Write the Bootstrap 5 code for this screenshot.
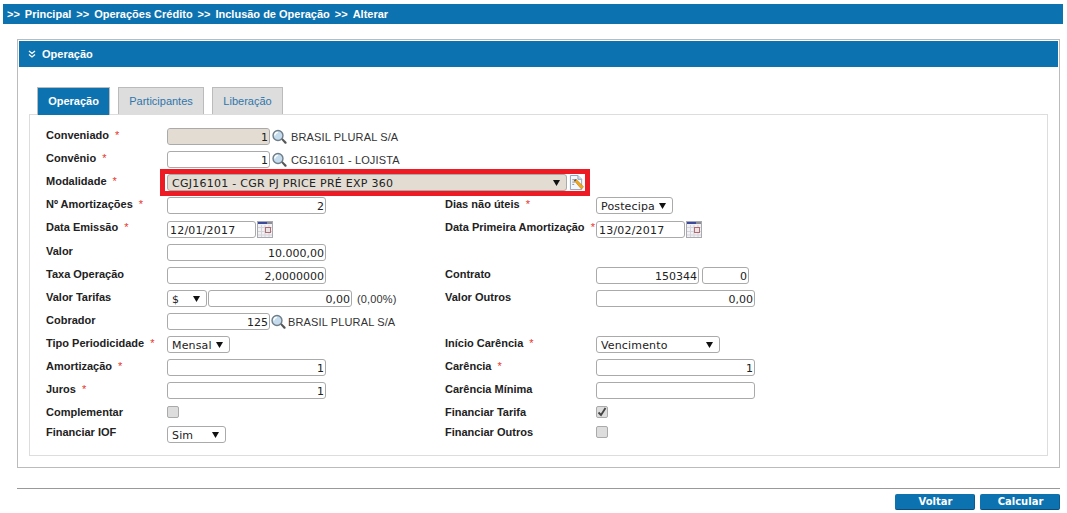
<!DOCTYPE html>
<html lang="pt-BR">
<head>
<meta charset="utf-8">
<title>Alterar Operação</title>
<link href="https://cdn.jsdelivr.net/npm/bootstrap@5.3.0/dist/css/bootstrap.min.css" rel="stylesheet">
<style>
html,body{height:513px;overflow:hidden;background:#fff}
body{font-family:"Liberation Sans",Arial,sans-serif;font-size:11px;color:#222;padding:4px 4px 0 3px}
.crumb-bar{height:20px;background:#0d72b0;color:#fff;font-weight:700;font-size:11px;padding-left:4px;gap:5px}
.main-wrap{margin:15px 3px 0 14px}
.panel-box{border:1px solid #bbb;padding:1px;border-radius:0}
.panel-box .panel-head{height:26px;background:#0d72b0;color:#fff;font-weight:700;font-size:11px;padding:0 0 0 9px;border:0;border-radius:0;gap:6px}
.panel-inner{padding:20px 10px 10px}
.tab-list{border:0;gap:8px;padding-left:8px;height:27px;position:relative;z-index:1}
.tab-list .nav-link{height:27px;border:1px solid #bbb;border-bottom:0;border-radius:0;background:#ddd;color:#2f76ab;font-size:11px;padding:7px 0 0;margin:0;line-height:13px;text-align:center}
.tab-list .nav-link.active{height:28px;background:#0d72b0;color:#fff;font-weight:700;border-color:#bbb}
.tab-w1{width:73px}.tab-w2{width:86px}.tab-w3{width:71px}
.tab-box{border:1px solid #ddd;padding:10px 0 0 16px;height:342px}
.frm-row{height:23px}
.frm-row.tall-row{height:24px;padding-top:1px}
.frm-row.short-row{height:21px}
.left-cell{width:399px;flex:none}
.left-label,.right-label{flex:none;font-weight:700;color:#222;padding-bottom:3px;white-space:nowrap}
.tall-row .left-label,.tall-row .right-label{padding-bottom:5px}
.short-row .left-label,.short-row .right-label{padding-bottom:1px}
.last-row .left-label,.last-row .right-label{padding-bottom:5px}
.left-label{width:121px}
.right-label{width:151px}
.req{color:#e8332a;margin-left:3px;font-weight:400}
.fld.form-control,.fld.form-select{height:17px;min-height:17px;font-family:"DejaVu Sans",Verdana,sans-serif;font-size:11px;line-height:13px;color:#222;border:1px solid #aaa;border-radius:3px;padding:1px 1px 0 2px;box-shadow:none;background-color:#fff;flex:none}
.fld.form-control{text-align:right}
.fld.txt-left.form-control{text-align:left;letter-spacing:.2px}
.fld.form-select{padding:1px 14px 0 4px;letter-spacing:.15px;background-image:url("data:image/svg+xml,%3Csvg xmlns='http://www.w3.org/2000/svg' width='7' height='6'%3E%3Cpath d='M0 0h7L3.500 6z' fill='%23111'/%3E%3C/svg%3E");background-size:7px 6px;background-position:right 6px center;color:#222}
.fld.form-select.wide-select{letter-spacing:.26px}
.fld.tan-fill{background-color:#e3dcd3}
.w-40p{width:40px}.w-47p{width:47px}.w-59p{width:59px}.w-63p{width:63px}.w-77p{width:77px}.w-89p{width:89px}.w-103p{width:103px}.w-124p{width:124px}.w-144p{width:144px}.w-159p{width:159px}.w-400p{width:400px}
.plain-txt{color:#333;letter-spacing:.14px;white-space:nowrap;padding-top:1px}
.ico{flex:none;display:block}
.gap-l1{margin-left:1px}.gap-l2{margin-left:2px}.gap-l3{margin-left:3px}.gap-l5{margin-left:5px}
.tick-box{width:12px;height:12px;background:#ddd;border:1px solid #aaa;border-radius:2px;flex:none;margin-bottom:2px}
.last-row .tick-box{margin-bottom:6px}
.red-mark{position:absolute;left:114px;top:-2px;width:430px;height:27px;border:5px solid #ed1c24;pointer-events:none}
.rule-line{border:0;border-top:1px solid #999;opacity:1;margin:20px 0 5px}
.act-gap{gap:5px}
.act-btn{width:80px;height:16px;background:#0d72b0;color:#fff;font-family:"DejaVu Sans",Verdana,sans-serif;font-weight:700;font-size:10px;line-height:13px;padding:0 0 0 2px;border:0;border-bottom:1px solid #0a4d7a;border-right:1px solid #0a5c90;border-radius:2px}
.act-btn:hover{background:#0d72b0;color:#fff}
</style>
</head>
<body>
<svg width="0" height="0" class="position-absolute">
  <defs>
    <symbol id="i-lupa" viewBox="0 0 16 16">
      <path d="M9.600 10.400l1.400-1.400 4.400 4.200q.6 1-.2 1.800-.9.600-1.700-.2z" fill="#555"/>
      <circle cx="6.400" cy="6.400" r="5.300" fill="#c4dcee" stroke="#6f7d88" stroke-width="1.500"/>
      <path d="M3 6.400a3.400 3.400 0 0 1 3.300-3.400" fill="none" stroke="#fff" stroke-width="1.400"/>
    </symbol>
    <symbol id="i-cal" viewBox="0 0 16 17">
      <rect x=".5" y=".5" width="15" height="16" fill="#f2f2f4" stroke="#a9a9b2"/>
      <rect x="1" y="1" width="9" height="2" fill="#3b4a9c"/>
      <rect x="10" y="1" width="5" height="2" fill="#8d8d95"/>
      <path d="M1 6.500h14M1 10.500h14M1 14h14M4.500 4v12M8 4v12M12 4v12" stroke="#d4d4da" fill="none"/>
      <rect x="8.500" y="6.500" width="5" height="5" fill="#ece4e4" stroke="#b06a72"/>
    </symbol>
    <symbol id="i-edit" viewBox="0 0 16 17">
      <path d="M1.500.5h8l4 4v11h-12z" fill="#f4f7fb" stroke="#8ba0b8"/>
      <path d="M9.500.5v4h4" fill="#dbe4ee" stroke="#8ba0b8"/>
      <path d="M3.500 5h4M3.500 7.500h3M3.500 10h2" stroke="#8a8a8a"/>
      <path d="M6 6.500l2-1.500 7.500 7.500-2.200 2.500z" fill="#f0a81e" stroke="#b9770c" stroke-width=".6"/>
      <path d="M6 6.500l2-1.500-.3-.5-2.300 1z" fill="#333"/>
    </symbol>
  </defs>
</svg>

<div class="crumb-bar d-flex align-items-center">
  <span>&gt;&gt;</span><span>Principal</span><span>&gt;&gt;</span><span>Operações Crédito</span><span>&gt;&gt;</span><span>Inclusão de Operação</span><span>&gt;&gt;</span><span>Alterar</span>
</div>

<div class="main-wrap">
  <div class="panel-box card">
    <div class="panel-head card-header d-flex align-items-center">
      <svg class="ico" width="8" height="8" viewBox="0 0 8 8"><path d="M1 1l3 2.500L7 1M1 4.500l3 2.500 3-2.500" fill="none" stroke="#fff" stroke-width="1.300"/></svg>
      <span>Operação</span>
    </div>
    <div class="panel-inner">
      <ul class="nav nav-tabs tab-list">
        <li class="nav-item"><a class="nav-link active tab-w1" href="#">Operação</a></li>
        <li class="nav-item"><a class="nav-link tab-w2" href="#">Participantes</a></li>
        <li class="nav-item"><a class="nav-link tab-w3" href="#">Liberação</a></li>
      </ul>
      <div class="tab-box">
        <div class="frm-row d-flex align-items-center">
          <div class="left-label">Conveniado <span class="req">*</span></div>
          <input class="fld form-control tan-fill w-103p" value="1">
          <svg class="ico gap-l2" width="15" height="16"><use href="#i-lupa"/></svg>
          <span class="plain-txt ms-1">BRASIL PLURAL S/A</span>
        </div>
        <div class="frm-row d-flex align-items-center">
          <div class="left-label">Convênio <span class="req">*</span></div>
          <input class="fld form-control w-103p" value="1">
          <svg class="ico gap-l2" width="15" height="16"><use href="#i-lupa"/></svg>
          <span class="plain-txt ms-1">CGJ16101 - LOJISTA</span>
        </div>
        <div class="frm-row d-flex align-items-center position-relative">
          <div class="left-label">Modalidade <span class="req">*</span></div>
          <select class="fld form-select wide-select tan-fill w-400p"><option>CGJ16101 - CGR PJ PRICE PRÉ EXP 360</option></select>
          <svg class="ico gap-l2" width="15" height="16"><use href="#i-edit"/></svg>
          <div class="red-mark"></div>
        </div>
        <div class="frm-row d-flex align-items-center">
          <div class="left-cell d-flex align-items-center">
            <div class="left-label">Nº Amortizações <span class="req">*</span></div>
            <input class="fld form-control w-159p" value="2">
          </div>
          <div class="right-label">Dias não úteis <span class="req">*</span></div>
          <select class="fld form-select w-77p"><option>Postecipa</option></select>
        </div>
        <div class="frm-row tall-row d-flex align-items-center">
          <div class="left-cell d-flex align-items-center">
            <div class="left-label">Data Emissão <span class="req">*</span></div>
            <input class="fld form-control txt-left w-89p" value="12/01/2017">
            <svg class="ico gap-l1" width="16" height="17"><use href="#i-cal"/></svg>
          </div>
          <div class="right-label">Data Primeira Amortização <span class="req">*</span></div>
          <input class="fld form-control txt-left w-89p" value="13/02/2017">
          <svg class="ico gap-l1" width="16" height="17"><use href="#i-cal"/></svg>
        </div>
        <div class="frm-row d-flex align-items-center">
          <div class="left-label">Valor</div>
          <input class="fld form-control w-159p" value="10.000,00">
        </div>
        <div class="frm-row d-flex align-items-center">
          <div class="left-cell d-flex align-items-center">
            <div class="left-label">Taxa Operação</div>
            <input class="fld form-control w-159p" value="2,0000000">
          </div>
          <div class="right-label">Contrato</div>
          <input class="fld form-control w-103p" value="150344">
          <input class="fld form-control w-47p gap-l3" value="0">
        </div>
        <div class="frm-row d-flex align-items-center">
          <div class="left-cell d-flex align-items-center">
            <div class="left-label">Valor Tarifas</div>
            <select class="fld form-select w-40p"><option>$</option></select>
            <input class="fld form-control w-144p gap-l1" value="0,00">
            <span class="plain-txt gap-l5">(0,00%)</span>
          </div>
          <div class="right-label">Valor Outros</div>
          <input class="fld form-control w-159p" value="0,00">
        </div>
        <div class="frm-row d-flex align-items-center">
          <div class="left-label">Cobrador</div>
          <input class="fld form-control w-103p" value="125">
          <svg class="ico gap-l1" width="15" height="16"><use href="#i-lupa"/></svg>
          <span class="plain-txt gap-l2">BRASIL PLURAL S/A</span>
        </div>
        <div class="frm-row d-flex align-items-center">
          <div class="left-cell d-flex align-items-center">
            <div class="left-label">Tipo Periodicidade <span class="req">*</span></div>
            <select class="fld form-select w-63p"><option>Mensal</option></select>
          </div>
          <div class="right-label">Início Carência <span class="req">*</span></div>
          <select class="fld form-select w-124p"><option>Vencimento</option></select>
        </div>
        <div class="frm-row d-flex align-items-center">
          <div class="left-cell d-flex align-items-center">
            <div class="left-label">Amortização <span class="req">*</span></div>
            <input class="fld form-control w-159p" value="1">
          </div>
          <div class="right-label">Carência <span class="req">*</span></div>
          <input class="fld form-control w-159p" value="1">
        </div>
        <div class="frm-row d-flex align-items-center">
          <div class="left-cell d-flex align-items-center">
            <div class="left-label">Juros <span class="req">*</span></div>
            <input class="fld form-control w-159p" value="1">
          </div>
          <div class="right-label">Carência Mínima</div>
          <input class="fld form-control w-159p" value="">
        </div>
        <div class="frm-row short-row d-flex align-items-center">
          <div class="left-cell d-flex align-items-center">
            <div class="left-label">Complementar</div>
            <span class="tick-box"></span>
          </div>
          <div class="right-label">Financiar Tarifa</div>
          <span class="tick-box d-flex align-items-center justify-content-center">
            <svg width="10" height="10" viewBox="0 0 10 10"><path d="M1.500 5.500l2.500 2.500 4.500-7" fill="none" stroke="#444" stroke-width="1.800"/></svg>
          </span>
        </div>
        <div class="frm-row last-row d-flex align-items-center">
          <div class="left-cell d-flex align-items-center">
            <div class="left-label">Financiar IOF</div>
            <select class="fld form-select w-59p"><option>Sim</option></select>
          </div>
          <div class="right-label">Financiar Outros</div>
          <span class="tick-box"></span>
        </div>
      </div>
    </div>
  </div>
  <hr class="rule-line">
  <div class="d-flex justify-content-end act-gap">
    <button class="btn act-btn" type="button">Voltar</button>
    <button class="btn act-btn" type="button">Calcular</button>
  </div>
</div>
</body>
</html>
